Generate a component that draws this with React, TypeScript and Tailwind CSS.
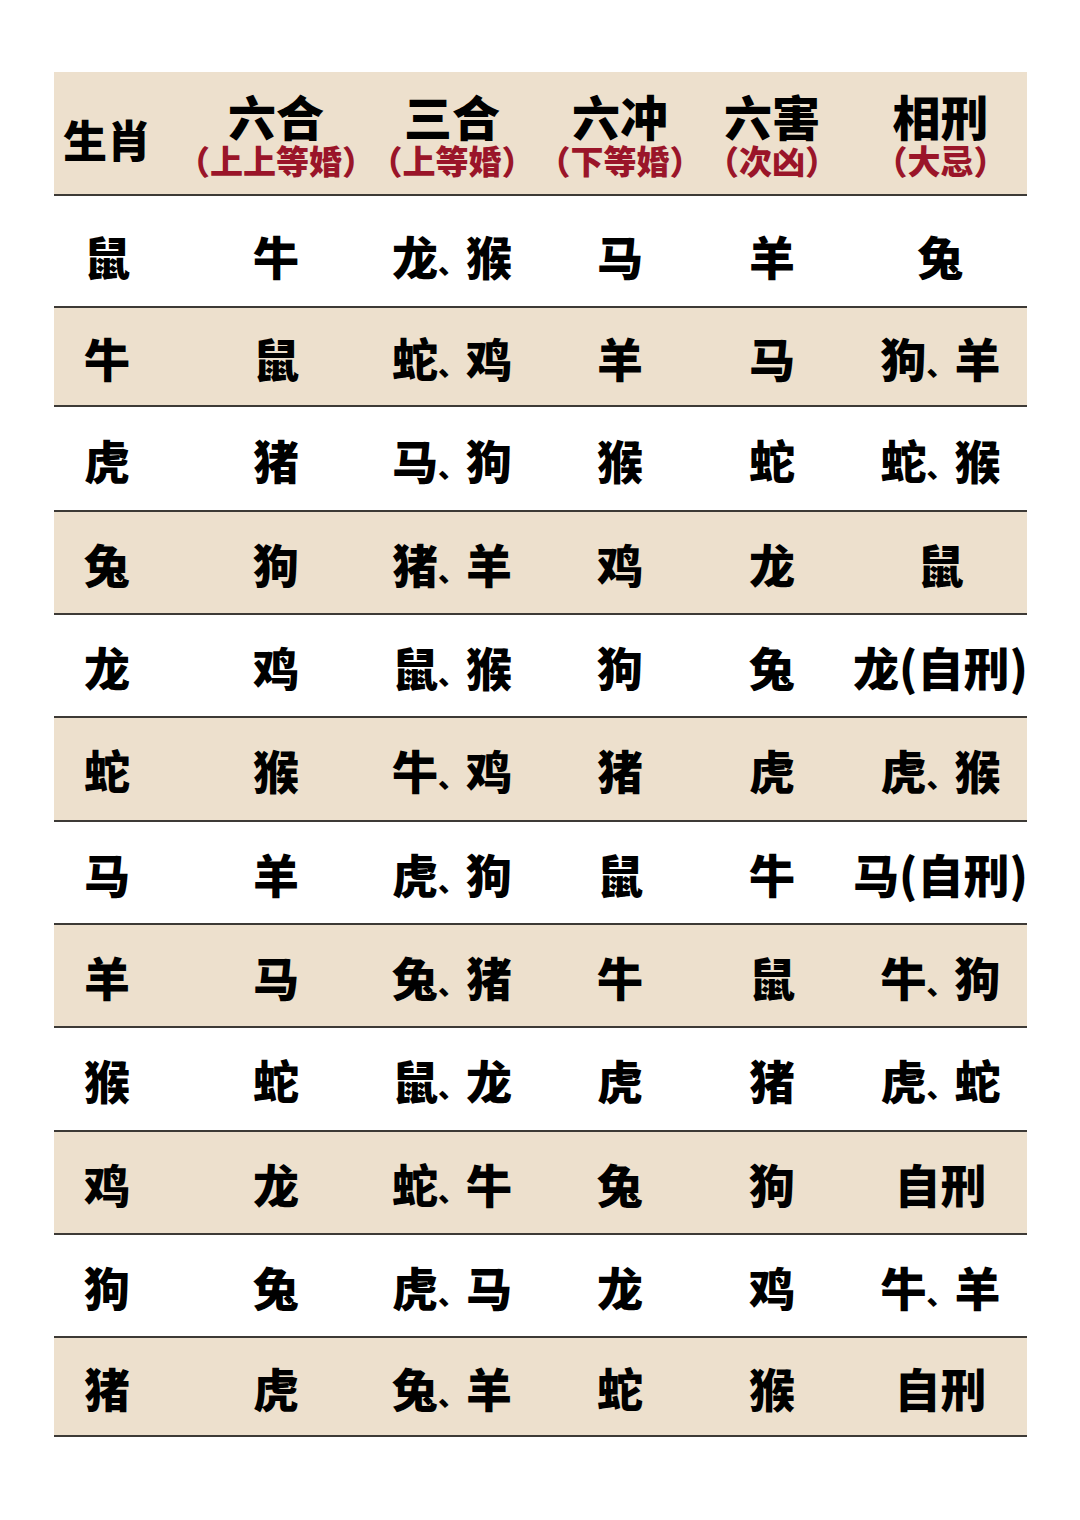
const headers = [
  { title: "生肖", note: "" },
  { title: "六合", note: "（上上等婚）" },
  { title: "三合", note: "（上等婚）" },
  { title: "六冲", note: "（下等婚）" },
  { title: "六害", note: "（次凶）" },
  { title: "相刑", note: "（大忌）" },
];

const rows = [
  { h: "h-[112px] pt-[8px]", cells: ["鼠", "牛", "龙、猴", "马", "羊", "兔"] },
  { h: "h-[99px]", cells: ["牛", "鼠", "蛇、鸡", "羊", "马", "狗、羊"] },
  { h: "h-[105px]", cells: ["虎", "猪", "马、狗", "猴", "蛇", "蛇、猴"] },
  { h: "h-[103px]", cells: ["兔", "狗", "猪、羊", "鸡", "龙", "鼠"] },
  { h: "h-[103px]", cells: ["龙", "鸡", "鼠、猴", "狗", "兔", "龙(自刑)"] },
  { h: "h-[104px]", cells: ["蛇", "猴", "牛、鸡", "猪", "虎", "虎、猴"] },
  { h: "h-[103px]", cells: ["马", "羊", "虎、狗", "鼠", "牛", "马(自刑)"] },
  { h: "h-[103px]", cells: ["羊", "马", "兔、猪", "牛", "鼠", "牛、狗"] },
  { h: "h-[104px]", cells: ["猴", "蛇", "鼠、龙", "虎", "猪", "虎、蛇"] },
  { h: "h-[103px]", cells: ["鸡", "龙", "蛇、牛", "兔", "狗", "自刑"] },
  { h: "h-[103px]", cells: ["狗", "兔", "虎、马", "龙", "鸡", "牛、羊"] },
  { h: "h-[99px]", cells: ["猪", "虎", "兔、羊", "蛇", "猴", "自刑"] },
];

const cols = "grid grid-cols-[106px_232px_120px_216px_88px_211px]";
const cellBase = "flex items-center justify-center whitespace-nowrap";

function Pair({ text }: { text: string }) {
  const [a, b] = text.split("、");
  return (
    <span className="flex items-end">
      <span>{a}</span>
      <span className="mb-[2px] text-[28px] leading-none">、</span>
      <span>{b}</span>
    </span>
  );
}

export default function App() {
  return (
    <div
      className="min-h-[1520px] w-[1080px] bg-white pt-[72px]"
      style={{ fontFamily: '"Noto Sans CJK SC", "Noto Sans", sans-serif' }}
    >
      <div className="ml-[54px] w-[973px]">
        <div className={`${cols} h-[124px] border-b-2 border-[#3d3a36] bg-[#ede0cd]`}>
          {headers.map((c, i) => (
            <div
              key={c.title}
              className={`${cellBase} flex-col ${i === 5 ? "pl-[38px]" : ""} ${
                i === 0 ? "pt-[14px]" : "pt-[2px]"
              }`}
            >
              <div
                className={`font-black leading-[1.12] text-black ${
                  i === 0 ? "text-[44px]" : "text-[48px]"
                }`}
              >
                {c.title}
              </div>
              {c.note && (
                <div className="text-[33px] font-black leading-[1.12] text-[#9a1529]">
                  {c.note}
                </div>
              )}
            </div>
          ))}
        </div>

        {rows.map((r, ri) => (
          <div
            key={ri}
            className={`${cols} ${r.h} border-b-2 border-[#3d3a36] ${
              ri % 2 === 1 ? "bg-[#ede0cd]" : "bg-white"
            }`}
          >
            {r.cells.map((c, ci) => (
              <div
                key={ci}
                className={`${cellBase} text-[46px] font-black leading-none text-black ${
                  ci === 5 ? "pl-[38px]" : ""
                }`}
              >
                {c.includes("、") ? <Pair text={c} /> : c}
              </div>
            ))}
          </div>
        ))}
      </div>
    </div>
  );
}
